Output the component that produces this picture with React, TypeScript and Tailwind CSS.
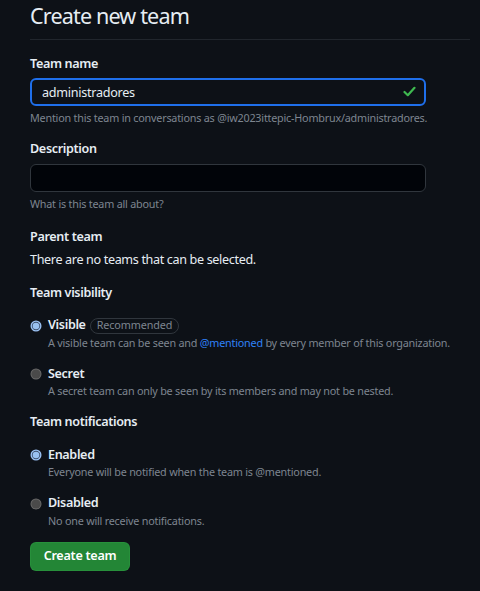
import { useState } from "react";

type Option = {
  key: string;
  label: string;
  desc: React.ReactNode;
  badge?: string;
};

function Radio({ checked }: { checked: boolean }) {
  return checked ? (
    <svg width="12" height="12" viewBox="0 0 12 12" className="shrink-0">
      <circle cx="6" cy="6" r="5.5" fill="#9cc3f5" />
      <circle cx="6" cy="6" r="4.2" fill="#3d4f6b" />
      <circle cx="6" cy="6" r="3.3" fill="#99c1f1" />
    </svg>
  ) : (
    <svg width="12" height="12" viewBox="0 0 12 12" className="shrink-0">
      <circle cx="6" cy="6" r="5.5" fill="#6a6a6a" />
      <circle cx="6" cy="6" r="4.6" fill="#4a4a4a" />
    </svg>
  );
}

function RadioGroup({ options, value, onChange }: { options: Option[]; value: string; onChange: (k: string) => void }) {
  return (
    <div className="flex flex-col">
      {options.map((o, i) => (
        <label
          key={o.key}
          onClick={() => onChange(o.key)}
          className={`flex flex-col cursor-pointer ${i === 0 ? "mt-[15px]" : "mt-[14.5px]"}`}
        >
          <div className="flex items-center h-[18px]">
            <Radio checked={value === o.key} />
            <span className="ml-[6px] text-[12.6px] font-semibold text-[#e6edf3]">{o.label}</span>
            {o.badge && (
              <span className="ml-[4px] h-[16px] px-[6px] flex items-center rounded-full border border-[#30363d] text-[10.8px] text-[#7d8590] tracking-[-0.01em]">
                {o.badge}
              </span>
            )}
          </div>
          <p className="ml-[18px] text-[10.8px] leading-[16px] text-[#7d8590] tracking-[-0.02em]">{o.desc}</p>
        </label>
      ))}
    </div>
  );
}

export default function App() {
  const [name, setName] = useState("administradores");
  const [desc, setDesc] = useState("");
  const [visibility, setVisibility] = useState("visible");
  const [notify, setNotify] = useState("enabled");

  return (
    <div
      className="min-h-[591px] w-full bg-[#0d1117] text-[#e6edf3] pl-[30px] pr-[10px] tracking-[-0.022em]"
      style={{ fontFamily: '"Noto Sans", "Open Sans", sans-serif' }}
    >
      <h1 className="text-[21.6px] font-normal leading-[32px] pb-[7px] border-b border-[#21262d] tracking-[-0.04em]">
        Create new team
      </h1>

      <form className="flex flex-col" onSubmit={(e) => e.preventDefault()}>
        <label className="mt-[15px] text-[12.6px] font-semibold leading-[18px]">Team name</label>
        <div className="relative mt-[5px] w-[396px]">
          <input
            value={name}
            onChange={(e) => setName(e.target.value)}
            className="w-full h-[28px] rounded-[6px] border-2 border-[#1f6feb] bg-[#0d1117] pl-[10px] pr-[30px] text-[12.6px] text-[#e6edf3] outline-none tracking-[-0.022em]"
          />
          <svg
            className="absolute right-[10px] top-[8px]"
            width="13"
            height="11"
            viewBox="0 0 13 11"
            fill="none"
          >
            <path d="M1.5 6 L4.8 9.2 L11.5 1.8" stroke="#3fb950" strokeWidth="2.2" strokeLinecap="round" strokeLinejoin="round" />
          </svg>
        </div>
        <p className="mt-[4px] text-[10.8px] leading-[16px] text-[#7d8590] tracking-[-0.02em]">
          Mention this team in conversations as @iw2023ittepic-Hombrux/administradores.
        </p>

        <label className="mt-[14px] text-[12.6px] font-semibold leading-[18px]">Description</label>
        <input
          value={desc}
          onChange={(e) => setDesc(e.target.value)}
          className="mt-[6px] w-[396px] h-[28px] rounded-[6px] border border-[#30363d] bg-[#010409] px-[11px] text-[12.6px] text-[#e6edf3] outline-none"
        />
        <p className="mt-[4px] text-[10.8px] leading-[16px] text-[#7d8590] tracking-[-0.02em]">What is this team all about?</p>

        <h3 className="mt-[15.5px] text-[12.6px] font-semibold leading-[18px]">Parent team</h3>
        <p className="mt-[5px] text-[12.6px] leading-[18px]">There are no teams that can be selected.</p>

        <h3 className="mt-[15px] text-[12.6px] font-semibold leading-[18px]">Team visibility</h3>
        <RadioGroup
          value={visibility}
          onChange={setVisibility}
          options={[
            {
              key: "visible",
              label: "Visible",
              badge: "Recommended",
              desc: (
                <>
                  A visible team can be seen and <span className="text-[#2f81f7]">@mentioned</span> by every member of this organization.
                </>
              ),
            },
            { key: "secret", label: "Secret", desc: "A secret team can only be seen by its members and may not be nested." },
          ]}
        />

        <h3 className="mt-[14px] text-[12.6px] font-semibold leading-[18px]">Team notifications</h3>
        <RadioGroup
          value={notify}
          onChange={setNotify}
          options={[
            { key: "enabled", label: "Enabled", desc: "Everyone will be notified when the team is @mentioned." },
            { key: "disabled", label: "Disabled", desc: "No one will receive notifications." },
          ]}
        />

        <div className="mt-[13.5px]">
          <button
            type="submit"
            className="h-[29px] w-[100px] rounded-[6px] bg-[#238636] border border-[#2ea043]/40 text-[12.6px] font-semibold text-white tracking-[-0.022em]"
          >
            Create team
          </button>
        </div>
      </form>
    </div>
  );
}
